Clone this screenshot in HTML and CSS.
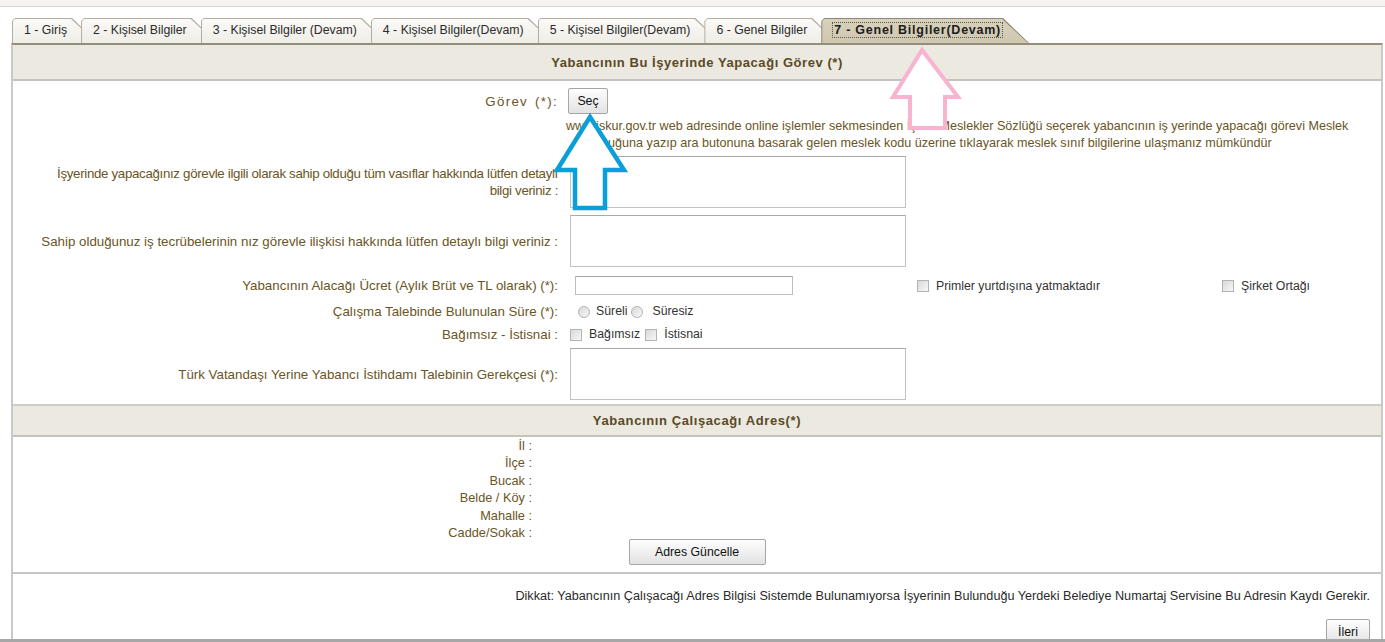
FILE: index.html
```html
<!DOCTYPE html>
<html lang="tr">
<head>
<meta charset="utf-8">
<title>Genel Bilgiler (Devam)</title>
<link rel="stylesheet" href="styles.css">
</head>
<body>
<div class="page">
  <div class="topstrip"></div>
  <div class="tabs">
    <div class="tab"><span>1 - Giriş</span></div>
    <div class="tab"><span>2 - Kişisel Bilgiler</span></div>
    <div class="tab"><span>3 - Kişisel Bilgiler (Devam)</span></div>
    <div class="tab"><span>4 - Kişisel Bilgiler(Devam)</span></div>
    <div class="tab"><span>5 - Kişisel Bilgiler(Devam)</span></div>
    <div class="tab"><span>6 - Genel Bilgiler</span></div>
    <div class="tab active"><span>7 - Genel Bilgiler(Devam)</span></div>
  </div>
  <div class="panel">
    <div class="sect-head">Yabancının Bu İşyerinde Yapacağı Görev (*)</div>

    <div class="row r-gorev">
      <div class="lbl lbl-gorev">Görev (*):</div>
      <div class="val"><button class="btn btn-sec">Seç</button></div>
    </div>
    <div class="row r-desc">
      <div class="lbl"></div>
      <div class="desc">www.iskur.gov.tr web adresinde online işlemler sekmesinden İşKur Meslekler Sözlüğü seçerek yabancının iş yerinde yapacağı görevi Meslek<br><span class="desc-l2">kutucuğuna yazıp ara butonuna basarak gelen meslek kodu üzerine tıklayarak meslek sınıf bilgilerine ulaşmanız mümkündür</span></div>
    </div>
    <div class="row r-ta1">
      <div class="lbl lbl-long">İşyerinde yapacağınız görevle ilgili olarak sahip olduğu tüm vasıflar hakkında lütfen detaylı<br>bilgi veriniz :</div>
      <div class="val"><div class="ta"></div></div>
    </div>
    <div class="row r-ta2">
      <div class="lbl">Sahip olduğunuz iş tecrübelerinin nız görevle ilişkisi hakkında lütfen detaylı bilgi veriniz :</div>
      <div class="val"><div class="ta"></div></div>
    </div>
    <div class="row r-ucret">
      <div class="lbl">Yabancının Alacağı Ücret (Aylık Brüt ve TL olarak) (*):</div>
      <div class="val flexval">
        <div class="c-input"><div class="txt"></div></div>
        <div class="c-prim"><span class="cb"></span><span class="opt">Primler yurtdışına yatmaktadır</span></div>
        <div class="c-sirket"><span class="cb"></span><span class="opt">Şirket Ortağı</span></div>
      </div>
    </div>
    <div class="row r-sure">
      <div class="lbl">Çalışma Talebinde Bulunulan Süre (*):</div>
      <div class="val opts">
        <span class="rd"></span><span class="opt">Süreli</span><span class="rd"></span><span class="opt">Süresiz</span>
      </div>
    </div>
    <div class="row r-bag">
      <div class="lbl">Bağımsız - İstisnai :</div>
      <div class="val opts">
        <span class="cb"></span><span class="opt">Bağımsız</span><span class="cb"></span><span class="opt">İstisnai</span>
      </div>
    </div>
    <div class="row r-ta3">
      <div class="lbl">Türk Vatandaşı Yerine Yabancı İstihdamı Talebinin Gerekçesi (*):</div>
      <div class="val"><div class="ta"></div></div>
    </div>

    <div class="sect-head sect2">Yabancının Çalışacağı Adres(*)</div>
    <div class="addr">
      <div class="addr-l">İl :</div>
      <div class="addr-l">İlçe :</div>
      <div class="addr-l">Bucak :</div>
      <div class="addr-l">Belde / Köy :</div>
      <div class="addr-l">Mahalle :</div>
      <div class="addr-l">Cadde/Sokak :</div>
    </div>
    <div class="addr-btn"><button class="btn btn-adres">Adres Güncelle</button></div>

    <div class="foot">
      <div class="dikkat">Dikkat: Yabancının Çalışacağı Adres Bilgisi Sistemde Bulunamıyorsa İşyerinin Bulunduğu Yerdeki Belediye Numartaj Servisine Bu Adresin Kaydı Gerekir.</div>
      <div class="next"><button class="btn btn-ileri">İleri</button></div>
    </div>
  </div>
  <div class="bottom-edge"></div>

  <svg class="arrows" width="1385" height="642" viewBox="0 0 1385 642">
    <polygon points="922,50 958,97 945,97 945,128 910,128 910,97 893,97" fill="#fff" stroke="#f7b3cf" stroke-width="4" stroke-linejoin="miter"/>
    <polygon points="590,117 624,170 605,170 605,208 575,208 575,170 557,170" fill="#fff" stroke="#0a9edb" stroke-width="4.5" stroke-linejoin="miter"/>
  </svg>
</div>
</body>
</html>
```
FILE: styles.css
```css
html, body {
  margin: 0;
  padding: 0;
  background: #fff;
  overflow: hidden;
}
body {
  font-family: "Liberation Sans", Arial, sans-serif;
  font-size: 12px;
  color: #333;
}
.page {
  position: relative;
  width: 1385px;
  height: 642px;
  display: flex;
  flex-direction: column;
  overflow: hidden;
}
.topstrip {
  height: 6px;
  background: #f4f3f0;
  border-bottom: 1px solid #d6d3cb;
  flex: none;
}
.tabs {
  display: flex;
  margin: 11px 0 0 12px;
  height: 25px;
  flex: none;
}
.tab {
  position: relative;
  height: 25px;
  line-height: 24px;
  padding: 0 31px 0 12px;
  margin-right: -17px;
  background: #b3aea3;
  clip-path: polygon(0 3px, 3px 0, calc(100% - 26px) 0, 100% 100%, 0 100%);
  white-space: nowrap;
  color: #2b2b2b;
  font-size: 12.3px;
}
.tab::before {
  content: "";
  position: absolute;
  left: 1px;
  top: 1px;
  right: 1px;
  bottom: 0;
  background: linear-gradient(#fbfaf7, #efede6);
  clip-path: polygon(0 2px, 2px 0, calc(100% - 26px) 0, 100% 100%, 0 100%);
}
.tab span {
  position: relative;
}
.tab.active {
  background: #8d8674;
  font-weight: bold;
  color: #1c1c1c;
  padding-right: 27px;
  font-size: 12.5px;
  letter-spacing: 0.75px;
}
.tab.active::before {
  background: linear-gradient(#d9d2bc, #cfc7ae);
}
.tab.active span {
  outline: 1px dotted #555;
  outline-offset: 0;
  padding: 0 1px;
  line-height: 14px;
  display: inline-block;
}

.panel {
  flex: 1;
  margin-left: 11px;
  width: 1368px;
  border-left: 2px solid #c9c9c9;
  border-right: 2px solid #c9c9c9;
  border-top: 2px solid #938d7c;
  overflow: hidden;
}
.sect-head {
  height: 34px;
  line-height: 36px;
  background: #ece9e1;
  border-bottom: 2px solid #c4c2bc;
  text-align: center;
  font-weight: bold;
  color: #5a4a26;
  font-size: 13px;
  letter-spacing: 0.55px;
}
.sect2 {
  margin-top: 4px;
  border-top: 2px solid #cfcdc7;
  height: 29px;
  line-height: 30px;
  letter-spacing: 0.6px;
}

.row {
  display: grid;
  grid-template-columns: 553px 1fr;
  align-items: center;
}
.lbl {
  text-align: right;
  padding-right: 8px;
  color: #6a5525;
  line-height: 17px;
  font-size: 13.3px;
  white-space: nowrap;
}
.lbl-long {
  letter-spacing: -0.32px;
}
.lbl-gorev {
  letter-spacing: 1.3px;
  word-spacing: 2px;
}
.r-gorev { margin-top: 7px; }
.r-desc { margin-top: 4px; align-items: start; }
.desc {
  color: #6a5525;
  line-height: 17px;
  white-space: nowrap;
  font-size: 12.6px;
}
.desc-l2 {
  padding-left: 12px;
}
.r-ta1 { margin-top: 4px; }
.r-ta2 { margin-top: 7px; }
.r-ucret { margin-top: 9px; }
.r-sure { margin-top: 8px; line-height: 17px; }
.r-bag { margin-top: 6px; line-height: 17px; }
.r-ta3 { margin-top: 5px; }

.ta {
  margin-left: 4px;
  width: 334px;
  height: 50px;
  border: 1px solid #c2c2c2;
  border-top-color: #a9a9a9;
  background: #fff;
}
.flexval {
  display: flex;
  align-items: center;
}
.c-input { width: 351px; }
.txt {
  margin-left: 9px;
  width: 216px;
  height: 17px;
  border: 1px solid #bdbdbd;
  border-top-color: #a5a5a5;
  background: #fff;
}
.c-prim { width: 305px; display: flex; align-items: center; }
.c-sirket { display: flex; align-items: center; }
.opts {
  display: flex;
  align-items: center;
}
.cb, .rd {
  display: inline-block;
  width: 10px;
  height: 10px;
  border: 1px solid #b3b3b3;
  background: linear-gradient(135deg, #d9d9d9, #f7f7f7);
  flex: none;
}
.rd { border-radius: 50%; }
.opt {
  color: #333;
  margin-left: 7px;
  font-size: 12.3px;
}
.r-sure .rd:first-child { margin-left: 12px; }
.r-sure .opt { margin-left: 6px; margin-right: 3px; }
.r-sure .opt + .rd { margin-left: 1px; margin-right: 3px; }
.r-bag .cb:first-child { margin-left: 4px; }
.r-bag .opt { margin-left: 7px; margin-right: 5px; }

.btn {
  font-family: "Liberation Sans", Arial, sans-serif;
  font-size: 12.3px;
  color: #111;
  background: linear-gradient(#fefefe, #f0f0f0 50%, #e2e2e2);
  border: 1px solid #a6a6a6;
  border-radius: 2px;
  height: 26px;
  padding: 0;
  margin: 0;
}
.btn-sec {
  width: 40px;
  margin-left: 2px;
  display: block;
}

.addr {
  width: 519px;
}
.addr-l {
  text-align: right;
  color: #6a5525;
  line-height: 17.4px;
  height: 17.4px;
  font-size: 12.75px;
}
.addr-btn {
  display: flex;
  justify-content: center;
  margin-top: -2px;
}
.btn-adres { width: 137px; }

.foot {
  margin-top: 7px;
  border-top: 2px solid #c6c6c6;
}
.dikkat {
  text-align: right;
  padding: 14px 11px 0 0;
  line-height: 17px;
  color: #2a2a2a;
  font-size: 12.65px;
}
.next {
  display: flex;
  justify-content: flex-end;
  padding-right: 11px;
  margin-top: 14px;
}
.btn-ileri { width: 44px; height: 26px; }

.bottom-edge {
  height: 3px;
  background: #a7a7a7;
  flex: none;
}
.arrows {
  position: absolute;
  left: 0;
  top: 0;
  pointer-events: none;
}
```
